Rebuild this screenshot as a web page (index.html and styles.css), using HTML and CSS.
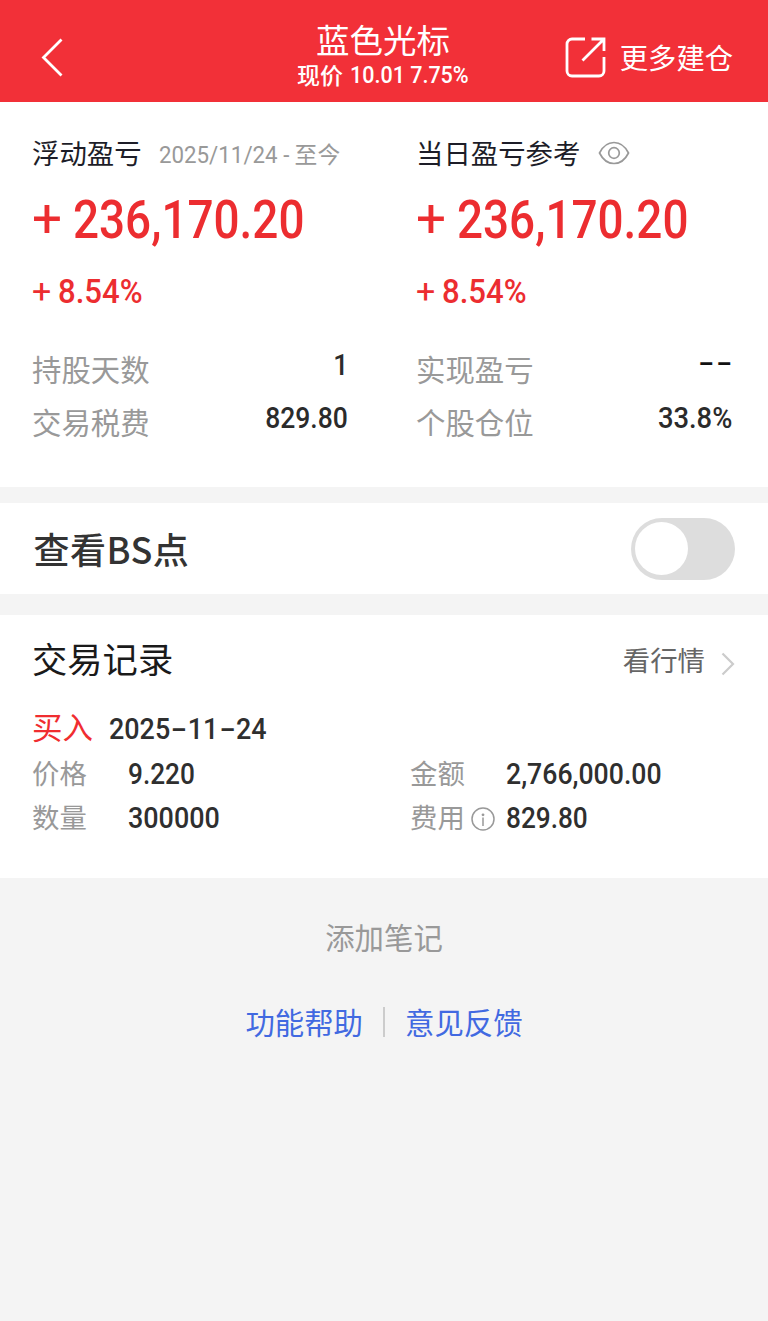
FILE: index.html
```html
<!DOCTYPE html>
<html lang="zh-CN">
<head>
<meta charset="utf-8">
<meta name="viewport" content="width=device-width, initial-scale=1">
<title>蓝色光标</title>
<link rel="stylesheet" href="styles.css">
</head>
<body>
<header class="header">
  <svg class="back" viewBox="0 0 24 40" fill="none" stroke="#fff" stroke-width="2.8"><path d="M21.500 2.500 3.500 20.500l18 18"/></svg>
  <div class="heading">
    <h1 class="name">蓝色光标</h1>
    <p class="quote"><span>现价</span><span class="num quote-num">10.01 7.75%</span></p>
  </div>
  <a class="more">
    <svg class="share" viewBox="0 0 42 42" fill="none" stroke="#fff" stroke-width="2.8"><path d="M21 3H8a5 5 0 0 0-5 5v27a5 5 0 0 0 5 5h27a5 5 0 0 0 5-5V21"/><path d="M27.500 3H40v12M39.500 3.500 18.500 24.500"/></svg>
    <span>更多建仓</span>
  </a>
</header>
<main>
  <section class="summary">
    <div class="col">
      <h2 class="title"><span>浮动盈亏</span><span class="range"><span class="num range-num">2025/11/24 -</span><span class="now">至今</span></span></h2>
      <div class="big"><span class="num plus">+</span><span class="num amount">236,170.20</span></div>
      <div class="pct"><span class="num plus">+</span><span class="num rate">8.54%</span></div>
      <dl class="facts">
        <div class="fact"><dt>持股天数</dt><dd class="num">1</dd></div>
        <div class="fact"><dt>交易税费</dt><dd class="num">829.80</dd></div>
      </dl>
    </div>
    <div class="col">
      <h2 class="title"><span>当日盈亏参考</span><svg class="eye" viewBox="0 0 32 24" fill="none" stroke="#999" stroke-width="1.7"><path d="M1.500 12C5 5 10 1.500 16 1.500S27 5 30.500 12c-3.500 7-8.500 10.500-14.500 10.500S5 19 1.500 12Z"/><circle cx="16" cy="12" r="5.300"/></svg></h2>
      <div class="big"><span class="num plus">+</span><span class="num amount">236,170.20</span></div>
      <div class="pct"><span class="num plus">+</span><span class="num rate">8.54%</span></div>
      <dl class="facts">
        <div class="fact"><dt>实现盈亏</dt><dd class="num empty">--</dd></div>
        <div class="fact"><dt>个股仓位</dt><dd class="num ratio">33.8%</dd></div>
      </dl>
    </div>
  </section>
  <section class="switch-row">
    <span class="switch-label">查看BS点</span>
    <span class="switch"><span class="knob"></span></span>
  </section>
  <section class="records">
    <div class="records-head">
      <h2 class="records-title">交易记录</h2>
      <a class="market"><span>看行情</span><svg class="arrow" viewBox="0 0 14 24" fill="none" stroke="#ccc" stroke-width="2.200"><path d="m1.500 1.500 10.500 10.500L1.500 22.500"/></svg></a>
    </div>
    <div class="trade"><span class="side">买入</span><span class="num date">2025<span class="dash">-</span>11<span class="dash">-</span>24</span></div>
    <dl class="details">
      <div class="detail"><dt>价格</dt><dd class="num">9.220</dd></div>
      <div class="detail"><dt>金额</dt><dd class="num money">2,766,000.00</dd></div>
      <div class="detail"><dt>数量</dt><dd class="num count">300000</dd></div>
      <div class="detail"><dt>费用<svg class="info" viewBox="0 0 24 24" fill="none" stroke="#999" stroke-width="1.500"><circle cx="12" cy="12" r="11"/><path d="M12 10.500V19"/><circle cx="12" cy="7.800" r="1.400" fill="#999" stroke="none"/></svg></dt><dd class="num">829.80</dd></div>
    </dl>
  </section>
</main>
<footer class="footer">
  <a class="note">添加笔记</a>
  <nav class="links"><a>功能帮助</a><span class="divider"></span><a>意见反馈</a></nav>
</footer>
</body>
</html>
```
FILE: styles.css
```css
* { box-sizing: border-box; }
body, h1, h2, p, dl, dd { margin: 0; font-weight: 400; }
body {
  min-height: 1321px;
  background: #f4f4f4;
  color: #1d1d28;
  font-family: "Noto Sans CJK SC", sans-serif;
}
.num {
  display: inline-block;
  font-family: Roboto, sans-serif;
  font-weight: 500;
  white-space: pre;
  transform-origin: 0 50%;
}

.header {
  display: grid;
  grid-template-columns: 1fr 172px 1fr;
  height: 102px;
  padding: 0 35px 0 33px;
  background: #f23038;
  color: #fff;
}
.back { width: 24px; height: 40px; margin: 37px 0 0 7px; }
.heading { display: flex; flex-direction: column; align-items: center; padding-top: 18px; }
.name { font-size: 33.5px; line-height: 42px; white-space: nowrap; }
.quote { display: flex; gap: 7px; width: 172px; font-size: 23px; line-height: 28px; font-weight: 500; white-space: nowrap; }
.quote-num { width: 118px; font-size: 23.5px; line-height: 30px; transform: scaleX(.915); }
.more { display: flex; justify-content: flex-end; gap: 14px; padding-top: 36px; font-size: 28.3px; line-height: 42px; }
.share { width: 42px; height: 42px; }

.summary {
  display: grid;
  grid-template-columns: 316px 316px;
  gap: 68px;
  height: 385px;
  padding: 26px 36px 0 32px;
  background: #fff;
}
.title { display: flex; height: 48px; font-size: 27.4px; line-height: 49px; white-space: nowrap; }
.range { display: flex; margin-left: 17px; color: #999; }
.range-num { width: 136px; font-size: 24.5px; line-height: 53px; font-weight: 400; transform: scaleX(.91); }
.now { font-size: 22.8px; line-height: 52px; }
.eye { width: 32px; height: 24px; margin: 13px 0 0 18px; }
.big, .pct { display: flex; color: #ec2d30; }
.big { font-size: 53px; line-height: 89px; height: 88px; }
.plus { font-weight: 400; }
.big .plus { width: 41px; line-height: 87px; }
.amount { transform: scaleX(.865); }
.pct { font-size: 34px; line-height: 55px; }
.pct .plus { width: 26px; }
.rate { transform: scaleX(.915); }
.facts { margin-top: 22px; }
.fact { display: flex; justify-content: space-between; height: 53px; font-size: 29.4px; line-height: 54px; color: #999; }
.fact .num { font-size: 28.8px; line-height: 48px; color: #2b2b2b; transform: scaleX(.92); transform-origin: 100% 50%; }
.fact .empty { line-height: 44px; transform: scaleX(1.6); letter-spacing: 1.500px; margin-right: -3px; color: #111; }
.fact .ratio { transform: scaleX(.95); }

.switch-row {
  display: flex;
  justify-content: space-between;
  height: 91px;
  margin: 16px 0 21px;
  padding: 0 33.5px;
  background: #fff;
}
.switch-label { font-size: 36px; line-height: 90px; font-weight: 500; letter-spacing: .5px; color: #333; }
.switch { width: 104px; height: 62px; margin-top: 15px; padding: 4px; border-radius: 31px; background: #ddd; }
.knob { display: block; width: 53px; height: 53px; border-radius: 50%; background: #fff; }

.records { height: 263px; padding: 15px 33px 0 32px; background: #fff; }
.records-head { display: flex; justify-content: space-between; height: 70px; }
.records-title { font-size: 35.3px; line-height: 56px; color: #1a1a1a; }
.market { display: flex; gap: 16px; font-size: 27.4px; line-height: 58px; color: #666; }
.arrow { width: 14px; height: 24px; margin-top: 22px; }
.trade { display: flex; gap: 16px; height: 52px; }
.side { font-size: 30.5px; line-height: 53px; color: #f02d30; }
.date { font-size: 28.8px; line-height: 58px; color: #2f2f2f; transform: scaleX(.935); }
.dash { display: inline-block; margin: 0 4.5px; transform: scaleX(1.75); }
.details { display: grid; grid-template-columns: 378px 1fr; }
.detail { display: flex; height: 43.5px; font-size: 27.4px; line-height: 41px; color: #999; }
.detail dt { display: flex; width: 96px; }
.detail .num { font-size: 28.8px; line-height: 44px; color: #2f2f2f; transform: scaleX(.91); }
.detail .money { transform: scaleX(.925); }
.detail .count { transform: scaleX(.935); }
.info { width: 24px; height: 24px; margin: 11px 0 0 6px; }

.footer { display: flex; flex-direction: column; align-items: center; padding-top: 36px; font-size: 29.4px; line-height: 45px; }
.note { color: #999; }
.links { display: flex; align-items: center; gap: 20px; margin-top: 40px; color: #4169e1; }
.divider { width: 2px; height: 30px; margin-top: 1px; background: #ccc; }
```
